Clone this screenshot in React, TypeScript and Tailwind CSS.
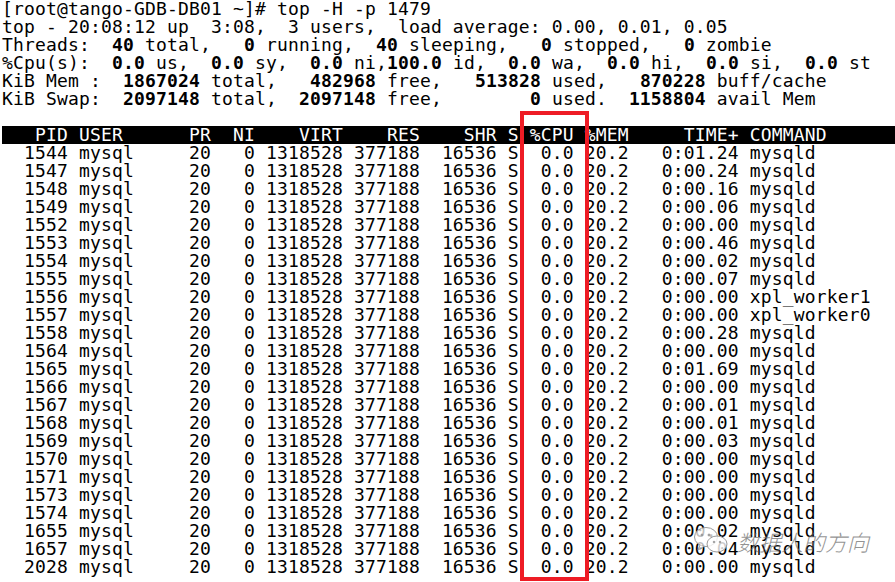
const B = ({ children }: { children: React.ReactNode }) => <span className="font-bold">{children}</span>;

const rows: [string, string, string?][] = [
  ["1544", "0:01.24"], ["1547", "0:00.24"], ["1548", "0:00.16"], ["1549", "0:00.06"],
  ["1552", "0:00.00"], ["1553", "0:00.46"], ["1554", "0:00.02"], ["1555", "0:00.07"],
  ["1556", "0:00.00", "xpl_worker1"], ["1557", "0:00.00", "xpl_worker0"], ["1558", "0:00.28"],
  ["1564", "0:00.00"], ["1565", "0:01.69"], ["1566", "0:00.00"], ["1567", "0:00.01"],
  ["1568", "0:00.01"], ["1569", "0:00.03"], ["1570", "0:00.00"], ["1571", "0:00.00"],
  ["1573", "0:00.00"], ["1574", "0:00.00"], ["1655", "0:00.02"], ["1657", "0:00.04"], ["2028", "0:00.00"],
];

export default function App() {
  return (
    <div className="relative w-[895px] h-[582px] overflow-hidden bg-white text-black">
      <div className="pl-[2px] font-['DejaVu_Sans_Mono',monospace] text-[18px] leading-[18px] tracking-[0.16px] whitespace-pre">
        <div className="h-[18px]">[root@tango-GDB-DB01 ~]# top -H -p 1479</div>
        <div className="h-[18px]">top - 20:08:12 up  3:08,  3 users,  load average: 0.00, 0.01, 0.05</div>
        <div className="h-[18px]">Threads:  <B>40</B> total,   <B>0</B> running,  <B>40</B> sleeping,   <B>0</B> stopped,   <B>0</B> zombie</div>
        <div className="h-[18px]">%Cpu(s):  <B>0.0</B> us,  <B>0.0</B> sy,  <B>0.0</B> ni,<B>100.0</B> id,  <B>0.0</B> wa,  <B>0.0</B> hi,  <B>0.0</B> si,  <B>0.0</B> st</div>
        <div className="h-[18px]">KiB Mem :  <B>1867024</B> total,   <B>482968</B> free,   <B>513828</B> used,   <B>870228</B> buff/cache</div>
        <div className="h-[18px]">KiB Swap:  <B>2097148</B> total,  <B>2097148</B> free,        <B>0</B> used.  <B>1158804</B> avail Mem</div>
        <div className="h-[18px]" />
        <div className="h-[18px] bg-black text-white">   PID USER      PR  NI    VIRT    RES    SHR S %CPU %MEM     TIME+ COMMAND</div>
        {rows.map(([pid, time, cmd]) => (
          <div key={pid} className="h-[18px]">{`  ${pid} mysql     20   0 1318528 377188  16536 S  0.0 20.2   ${time} ${cmd ?? "mysqld"}`}</div>
        ))}
      </div>
      <div className="absolute left-[520px] top-[111px] w-[69px] h-[470px] border-[4px] border-[#ee1c25]" />
      <div className="absolute left-[693px] top-[526px] flex items-center gap-[8px] text-[#6f6f6f]">
        <svg width="36" height="30" viewBox="0 0 36 30" fill="none" stroke="#9a9a9a" strokeWidth="1">
          <ellipse cx="13" cy="11" rx="11.5" ry="9.5" fill="#ffffff" fillOpacity="0.75" />
          <path d="M7 19 L5 24 L11 20.5" fill="#ffffff" fillOpacity="0.75" />
          <ellipse cx="24" cy="18" rx="10" ry="8" fill="#ffffff" fillOpacity="0.8" />
          <circle cx="9" cy="9" r="1" fill="#9a9a9a" />
          <circle cx="16" cy="9" r="1" fill="#9a9a9a" />
          <circle cx="21" cy="16" r="0.8" fill="#9a9a9a" />
          <circle cx="27" cy="16" r="0.8" fill="#9a9a9a" />
        </svg>
        <span className="font-['Noto_Sans_CJK_SC',sans-serif] italic font-light text-[22px] leading-[24px] opacity-75">数据人的方向</span>
      </div>
    </div>
  );
}
